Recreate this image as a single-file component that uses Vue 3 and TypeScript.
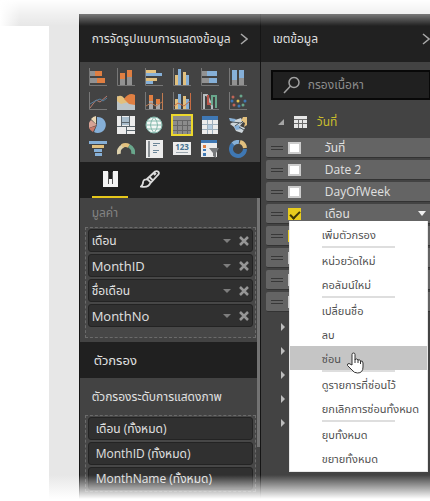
<script setup lang="ts">
import { ref } from 'vue'

interface Part {
  d: string
  fill?: string
  stroke?: string
  width?: number
}

interface Visual {
  name: string
  parts: Part[]
  text?: string
}

const orange = '#e07f42'
const blue = '#86b0d8'
const deep = '#3f78b4'
const sand = '#e2c07e'
const gray = '#929292'
const pale = '#ececec'
const green = '#69a78c'
const axes: Part = { d: 'M.5 0V17.5H18', stroke: '#777777' }

const visuals: Visual[] = [
  { name: 'แท่งแบบเรียงซ้อน', parts: [axes,
    { d: 'M1 3H6V8H1zM1 10H8V15H1z', fill: gray },
    { d: 'M6 3H13V8H6zM8 10H16V15H8z', fill: orange }] },
  { name: 'คอลัมน์แบบเรียงซ้อน', parts: [axes,
    { d: 'M3 5H8V11H3zM10 2H15V9H10z', fill: orange },
    { d: 'M3 11H8V17H3zM10 9H15V17H10z', fill: gray }] },
  { name: 'แท่งแบบกลุ่ม', parts: [axes,
    { d: 'M1 2H11V5H1zM1 10H12V13H1z', fill: sand },
    { d: 'M1 5H17V8H1zM1 13H8V16H1z', fill: blue }] },
  { name: 'คอลัมน์แบบกลุ่ม', parts: [axes,
    { d: 'M2 7H5V17H2zM10 4H13V17H10z', fill: sand },
    { d: 'M5 1H8V17H5zM13 7H16V17H13z', fill: blue }] },
  { name: 'แท่งแบบ 100%', parts: [axes,
    { d: 'M1 3H6V8H1zM1 10H8V15H1z', fill: gray },
    { d: 'M6 3H16V8H6zM8 10H16V15H8z', fill: blue }] },
  { name: 'คอลัมน์แบบ 100%', parts: [axes,
    { d: 'M3 2H8V12H3zM10 2H15V10H10z', fill: blue },
    { d: 'M3 12H8V17H3zM10 10H15V17H10z', fill: gray }] },
  { name: 'แผนภูมิเส้น', parts: [axes,
    { d: 'M1 16L7 8L11 10L18 4', stroke: '#b77d70' },
    { d: 'M1 12L6 9L11 7L14 9L18 6', stroke: '#557f9e' }] },
  { name: 'แผนภูมิพื้นที่', parts: [
    { d: 'M0 4L4 6L9 9L18 10V18H0z', fill: '#bcc4c8' },
    { d: 'M0 5Q4 2 7 6L12 10L4 12L0 9z', fill: sand },
    { d: 'M7 7Q12 0 18 3V13L12 12z', fill: orange }] },
  { name: 'เส้นและคอลัมน์แบบเรียงซ้อน', parts: [axes,
    { d: 'M4 3H8V9H4zM11 7H15V12H11z', fill: orange },
    { d: 'M4 9H8V17H4zM11 12H15V17H11z', fill: '#aaaaaa' },
    { d: 'M1 14L6 11L11 14L17 10M17.5 1V18', stroke: '#c17b50' }] },
  { name: 'เส้นและคอลัมน์แบบกลุ่ม', parts: [axes,
    { d: 'M2 7H5V17H2zM10 4H13V17H10z', fill: sand },
    { d: 'M5 2H8V17H5zM13 7H16V17H13z', fill: blue },
    { d: 'M1 14L5 11L11 14L17 9M17.5 1V18', stroke: '#c76c43' }] },
  { name: 'แผนภูมิริบบิ้น', parts: [axes,
    { d: 'M3 17V3H6L11 14V17', stroke: '#b7bec0', width: 2 },
    { d: 'M7 3V12H11', stroke: '#b95449', width: 2 },
    { d: 'M11 13V4H15V16', stroke: green, width: 2 }] },
  { name: 'แผนภูมิกระจาย', parts: [axes,
    { d: 'M4 5h0M5 13h0', stroke: '#c06557', width: 3 },
    { d: 'M9 9h0', stroke: '#e4c24f', width: 3 },
    { d: 'M12 4h0M14 13h0', stroke: green, width: 3 },
    { d: 'M3 9h0M10 14h0M16 9h0', stroke: deep, width: 3 }] },
  { name: 'แผนภูมิวงกลม', parts: [
    { d: 'M8 9V1A8 8 0 1 1 5 16z', fill: blue },
    { d: 'M8 9L0 12A8 8 0 0 1 2 4z', fill: '#d7a295' },
    { d: 'M7 8L2 3A8 8 0 0 1 7 0z', fill: '#ead7b4' },
    { d: 'M7 10L4 16A8 8 0 0 1 0 12z', fill: '#c9796a' }] },
  { name: 'ทรีแมป', parts: [
    { d: 'M0 0H18V18H0z', fill: pale },
    { d: 'M5 1H12V9H5z', fill: '#a9bdcc' },
    { d: 'M4.5 0V10M0 10.5H18M9.5 10V18M5 6.5H12M12.5 0V10M10 14.5H18', stroke: '#5b666d' }] },
  { name: 'แผนที่', parts: [
    { d: 'M9 1A8 8 0 1 1 9 17A8 8 0 1 1 9 1z', fill: '#f4f8f6' },
    { d: 'M9 1A8 8 0 1 1 9 17A8 8 0 1 1 9 1zM9 1Q2 9 9 17M9 1Q16 9 9 17M2 5H16M1 9H17M2 13H16', stroke: '#84b8ac' }] },
  { name: 'ตาราง', parts: [
    { d: 'M0 0H18V18H0z', fill: '#8c8c8c' },
    { d: 'M0 4.5H18M0 9.5H18M0 14.5H18M4.5 4V18M9.5 4V18M14.5 4V18', stroke: '#666666' }] },
  { name: 'เมทริกซ์', parts: [
    { d: 'M1 0H17V18H1z', fill: pale },
    { d: 'M1 0H17V4H1z', fill: deep },
    { d: 'M6 9H11V13H6z', fill: '#b6cee2' },
    { d: 'M1 8.5H17M1 13.5H17M6.5 4V18M11.5 4V18', stroke: '#9eafbc' }] },
  { name: 'แผนที่แถบสี', parts: [
    { d: 'M0 2L6 4L12 2L14 6L11 10L16 12L13 17L7 15L5 11L1 8L4 6z', fill: '#cdd5da' },
    { d: 'M0 2L7 3L5 6L1 5zM5 10L10 9L12 13L7 14z', fill: blue },
    { d: 'M14 1H18V9L15 11L16 7L12 5z', fill: sand },
    { d: 'M3 6L12 7L14 5M6 10L10 7M10 11L15 14', stroke: '#4e5960' }] },
  { name: 'กรวย', parts: [
    { d: 'M0 1H18V4H0zM5 9H13V12H5z', fill: blue },
    { d: 'M3 5H15V8H3z', fill: sand },
    { d: 'M6 13H13V16H6z', fill: blue }] },
  { name: 'หน้าปัด', parts: [
    { d: 'M2 14A7 7 0 0 1 6 6', stroke: '#ddd1ac', width: 4 },
    { d: 'M5 6A7 7 0 0 1 12 6', stroke: sand, width: 4 },
    { d: 'M12 6A7 7 0 0 1 16 14', stroke: green, width: 4 }] },
  { name: 'การ์ดหลายแถว', parts: [
    { d: 'M1 0H18V18H1z', fill: pale },
    { d: 'M4 1V17', stroke: '#8b9195', width: 2 },
    { d: 'M8 3.5H15M8 5.5H12M8 10.5H14M8 12.5H12', stroke: '#6d8799' }] },
  { name: 'การ์ด', text: '123', parts: [
    { d: 'M0 2H18V15H0z', fill: pale },
    { d: 'M3 12.5H15', stroke: '#9aa5ad' }] },
  { name: 'ตัวแบ่งส่วนข้อมูล', parts: [
    { d: 'M0 0H16V17H0z', fill: pale },
    { d: 'M0 0H16V3H0z', fill: deep },
    { d: 'M2 5H5V8H2z', fill: orange },
    { d: 'M2 9H5V11H2zM2 13H5V16H2z', fill: deep },
    { d: 'M8 8H18L15 13V18L12 16V13z', fill: '#77797b' }] },
  { name: 'โดนัท', parts: [
    { d: 'M4 4A7 7 0 1 0 16 9', stroke: deep, width: 4 },
    { d: 'M4 4A7 7 0 0 1 10 2', stroke: blue, width: 4 },
    { d: 'M11 2A7 7 0 0 1 16 8', stroke: sand, width: 4 }] },
]

const values = [
  { name: 'เดือน', thai: true },
  { name: 'MonthID', thai: false },
  { name: 'ชื่อเดือน', thai: true },
  { name: 'MonthNo', thai: false },
]
const filters = ['เดือน (ทั้งหมด)', 'MonthID (ทั้งหมด)', 'MonthName (ทั้งหมด)']
const query = ref('')

// Rows without a name lie fully under the open menu.
const fields = ref([
  { name: 'วันที่', checked: false },
  { name: 'Date 2', checked: false },
  { name: 'DayOfWeek', checked: false },
  { name: 'เดือน', checked: true },
  { name: '', checked: true },
  { name: '', checked: false },
  { name: '', checked: false },
  { name: '', checked: false },
])

const menu = [
  ['เพิ่มตัวกรอง'],
  ['หน่วยวัดใหม่', 'คอลัมน์ใหม่'],
  ['เปลี่ยนชื่อ', 'ลบ', 'ซ่อน'],
  ['ดูรายการที่ซ่อนไว้', 'ยกเลิกการซ่อนทั้งหมด'],
  ['ยุบทั้งหมด', 'ขยายทั้งหมด'],
]
</script>

<template>
  <div class="app">
    <div class="canvas"><div class="sheet"></div></div>

    <section class="panel visuals">
      <header class="head">
        <h2>การจัดรูปแบบการแสดงข้อมูล</h2>
        <button class="collapse" aria-label="ยุบ">
          <svg width="8" height="12" viewBox="0 0 8 12"><path d="M1 1L7 6L1 11" /></svg>
        </button>
      </header>

      <div class="gallery">
        <button v-for="v in visuals" :key="v.name" class="visual" :class="{ selected: v.name === 'ตาราง' }" :aria-label="v.name">
          <svg width="18" height="18" viewBox="0 0 18 18">
            <path
              v-for="(p, i) in v.parts"
              :key="i"
              :d="p.d"
              :fill="p.fill ?? 'none'"
              :stroke="p.stroke ?? 'none'"
              :stroke-width="p.width ?? 1"
              :stroke-linecap="v.name === 'แผนภูมิกระจาย' ? 'round' : 'butt'"
            />
            <text v-if="v.text" class="digits" x="9" y="10" text-anchor="middle">{{ v.text }}</text>
          </svg>
        </button>
      </div>

      <div class="tabs">
        <button class="tab active" aria-label="เขตข้อมูล">
          <svg width="16" height="18" viewBox="0 0 16 18"><path fill="#f4f4f4" d="M1 1H6V11H7V9H10V11H11V1H16V17H1z" /><path d="M6.5 2V14M10.5 2V14" stroke="#555555" /></svg>
        </button>
        <button class="tab" aria-label="รูปแบบ">
          <svg width="20" height="18" viewBox="0 0 20 18" fill="none" stroke="#dcdcdc" stroke-width="1.8">
            <path d="M7 9L15 1.5Q17 .5 18.500 2Q19.500 3.500 18 5L11 12.500zM7 9L11 12.500M9.500 7L13 10.500M7 9.500Q3 9 3 13Q2.500 15.500 1 16.500Q9 18 10.500 12.500M14 5L16 3" />
          </svg>
        </button>
      </div>

      <div class="wells">
        <h3 class="well-title muted">มูลค่า</h3>
        <ul class="well values">
          <li v-for="v in values" :key="v.name" class="pill" :class="{ thai: v.thai }">
            <span>{{ v.name }}</span>
            <button class="icon-button" aria-label="ตัวเลือก"><svg width="8" height="4" viewBox="0 0 8 4"><path fill="#7d7d7d" d="M0 0H8L4 4z" /></svg></button>
            <button class="icon-button" aria-label="เอาออก"><svg width="10" height="10" viewBox="0 0 10 10"><path stroke="#969696" stroke-width="2.5" d="M1 1L9 9M9 1L1 9" /></svg></button>
          </li>
        </ul>
        <h2 class="subhead">ตัวกรอง</h2>
        <h3 class="well-title level">ตัวกรองระดับการแสดงภาพ</h3>
        <ul class="well filters">
          <li v-for="f in filters" :key="f" class="pill thai">{{ f }}</li>
        </ul>
        <div class="scrollbar"></div>
      </div>
    </section>

    <section class="panel fields">
      <header class="head">
        <h2>เขตข้อมูล</h2>
        <button class="collapse" aria-label="ยุบ">
          <svg width="8" height="12" viewBox="0 0 8 12"><path d="M1 1L7 6L1 11" /></svg>
        </button>
      </header>
      <label class="search">
        <svg width="18" height="18" viewBox="0 0 18 18" fill="none" stroke="#a0a0a0" stroke-width="1.5"><circle cx="11" cy="6.5" r="5" /><path d="M7.500 10L1 17" /></svg>
        <input v-model="query" type="text" placeholder="กรองเนื้อหา" aria-label="กรองเนื้อหา" />
      </label>
      <button class="table-node">
        <svg width="6" height="6" viewBox="0 0 6 6"><path fill="#a5a5a5" d="M6 0V6H0z" /></svg>
        <svg width="13" height="12" viewBox="0 0 13 12"><path fill="#e6e6e6" d="M0 0H13V12H0z" /><path stroke="#6a6a6a" d="M0 3.5H13M0 7.5H13M4.5 3V12M8.5 3V12" /></svg>
        <span>วันที่</span>
      </button>

      <div class="field-list">
        <label v-for="(f, i) in fields" :key="i" class="field">
          <span class="grip"></span>
          <input v-model="f.checked" type="checkbox" :aria-label="f.name || 'เขตข้อมูล'" />
          <span class="field-name">{{ f.name }}</span>
          <svg v-if="f.name === 'เดือน'" width="8" height="5" viewBox="0 0 8 5"><path fill="#f0f0f0" d="M0 0H8L4 5z" /></svg>
        </label>

        <div class="menu" role="menu">
          <div v-for="(group, g) in menu" :key="g" class="group">
            <button v-for="item in group" :key="item" class="item" :class="{ hover: item === 'ซ่อน' }" role="menuitem">
              {{ item }}
              <svg v-if="item === 'ซ่อน'" class="pointer" width="18" height="22" viewBox="0 0 18 22">
                <path fill="#ffffff" stroke="#333333" d="M6 13V2.500Q6 1 7.500 1T9 2.500V7.500Q11 6 12 8Q14 7 14.500 9Q17 8.500 17 11V15Q17 21 11.500 21Q8 21 6 18L1.500 13.500Q1 11.500 3 11.500z" />
                <path fill="none" stroke="#333333" d="M9 7V11M12 8V11M14.500 9V12" />
              </svg>
            </button>
          </div>
        </div>
      </div>

      <div class="closed-nodes">
        <button v-for="n in 5" :key="n" class="closed" aria-label="ขยาย">
          <svg width="4" height="8" viewBox="0 0 4 8"><path fill="#bdbdbd" d="M0 0L4 4L0 8z" /></svg>
        </button>
      </div>
    </section>
  </div>
</template>

<style>
body {
  background: #ffffff;
}
</style>

<style scoped>
.app {
  position: relative;
  display: flex;
  height: 100vh;
  overflow: hidden;
  background: #e7e7e7;
  color: #e0e0e0;
  font: 12px/16px "Open Sans", "Noto Sans", "Noto Sans Thai", sans-serif;
}
.app * {
  box-sizing: border-box;
}
.app::before,
.app::after {
  content: "";
  position: absolute;
  inset: 0;
  pointer-events: none;
  z-index: 5;
}
.app::before {
  background: linear-gradient(to bottom, #ffffff, rgba(255, 255, 255, 0.4) 14px, rgba(255, 255, 255, 0) 26px);
}
.app::after {
  background:
    linear-gradient(to top, #ffffff 2px, rgba(255, 255, 255, 0) 26px),
    linear-gradient(to right, #ffffff, rgba(255, 255, 255, 0) 20px);
}
button {
  padding: 0;
  border: 0;
  background: none;
  color: inherit;
  font: inherit;
  display: flex;
  align-items: center;
}
h2,
h3,
ul {
  margin: 0;
  padding: 0;
  font: inherit;
  list-style: none;
}
.canvas {
  flex: 79;
  padding-top: 26px;
}
.sheet {
  width: 49px;
  height: 100%;
  background: #ffffff;
}
.panel {
  margin-top: 14px;
  background: #434343;
  border-left: 1px solid #151515;
  min-width: 0;
}
.visuals {
  flex: 181;
}
.fields {
  flex: 170;
}
.head {
  display: flex;
  align-items: center;
  justify-content: space-between;
  height: 48px;
  padding: 2px 12px 0;
  background: #212121;
  white-space: nowrap;
}
.fields .head {
  padding-right: 0;
}
.collapse path {
  fill: none;
  stroke: #a8a8a8;
  stroke-width: 1.5;
}
.gallery {
  display: grid;
  grid-template-columns: repeat(6, 28px);
  grid-auto-rows: 24px;
  padding: 3px 0 1px 4px;
}
.visual {
  justify-content: center;
}
.visual.selected svg {
  box-sizing: content-box;
  border: 2px solid #ecd82c;
}
.digits {
  font: bold 8px "Open Sans", sans-serif;
  fill: #47718f;
}
.tabs {
  display: flex;
  gap: 4px;
  height: 36px;
  padding-left: 12px;
  background: #1f1f1f;
}
.tab {
  justify-content: center;
  width: 36px;
  border-bottom: 2px solid transparent;
}
.tab.active {
  border-color: #e6c71b;
}
.wells {
  position: relative;
}
.well-title {
  padding: 7px 12px;
}
.muted {
  color: #838383;
  height: 29px;
}
.level {
  height: 37px;
  padding-top: 11px;
}
.well {
  display: flex;
  flex-direction: column;
  gap: 2px;
  margin: 0 4px 0 5px;
  padding: 1px 2px;
  border: 1px dashed #6b6b6b;
  background: #474747;
}
.values {
  height: 111px;
  margin-bottom: 4px;
}
.pill {
  display: flex;
  align-items: center;
  gap: 8px;
  height: 23px;
  flex: none;
  padding: 0 3px;
  border: 1px solid #232323;
  border-radius: 3px;
  background: #303030;
  font-size: 13px;
  white-space: nowrap;
}
.pill.thai {
  font-size: 12px;
}
.pill span {
  flex: 1;
}
.filters .pill {
  padding-left: 7px;
}
.subhead {
  height: 36px;
  padding: 10px 14px;
  background: #202020;
  font-size: 13px;
}
.scrollbar {
  position: absolute;
  top: 0;
  right: 0;
  width: 3px;
  height: 249px;
  background: #737373;
}
.search {
  display: flex;
  align-items: center;
  gap: 7px;
  height: 30px;
  margin: 8px 0 0 10px;
  padding-left: 10px;
  border: 2px solid #080808;
  border-right-width: 1px;
  background: #202020;
}
.search input {
  flex: 1;
  min-width: 0;
  padding: 0;
  border: 0;
  outline: 0;
  background: none;
  color: #e0e0e0;
  font: inherit;
}
.search input::placeholder {
  color: #8c8c8c;
  opacity: 1;
}
.table-node {
  height: 38px;
  padding: 6px 0 0 17px;
  color: #c9bd2d;
  gap: 10px;
}
.field-list {
  position: relative;
  display: flex;
  flex-direction: column;
  gap: 2px;
  padding-left: 5px;
}
.field {
  display: flex;
  align-items: center;
  height: 20px;
  padding: 0 4px 0 5px;
  border-bottom: 1px solid #333333;
  border-radius: 2px 0 0 2px;
  background: #646464;
}
.grip {
  width: 12px;
  height: 4px;
  margin-right: 5px;
  border: solid #383838;
  border-width: 1px 0;
}
.field input {
  appearance: none;
  width: 13px;
  height: 12px;
  margin: 0 24px 0 0;
  border: 2px solid #cccccc;
  background: #ffffff;
}
.field input:checked {
  border-color: #e8cc1d;
  background: #e8cc1d;
}
.field input:checked::after {
  content: "";
  display: block;
  width: 8px;
  height: 4px;
  margin: 1px 0 0;
  border: solid #3b3609;
  border-width: 0 0 2px 2px;
  transform: rotate(-45deg);
}
.field-name {
  flex: 1;
}
.menu {
  position: absolute;
  top: 83px;
  left: 28px;
  right: 2px;
  padding: 1px 0;
  background: #ffffff;
  border: solid #e8e8e8;
  border-width: 0 1px 1px;
  color: #505050;
  font-size: 11px;
  z-index: 2;
}
.group + .group::before {
  content: "";
  display: block;
  width: 73px;
  height: 2px;
  margin-left: 32px;
  background: #dedede;
}
.item {
  width: 100%;
  height: 24px;
  padding: 1px 0 0 32px;
  white-space: nowrap;
}
.item.hover {
  background: #c5c5c5;
}
.pointer {
  margin: 8px 0 0 5px;
  flex: none;
}
.closed-nodes {
  padding: 3px 0 0 20px;
}
.closed {
  height: 24px;
}
</style>
